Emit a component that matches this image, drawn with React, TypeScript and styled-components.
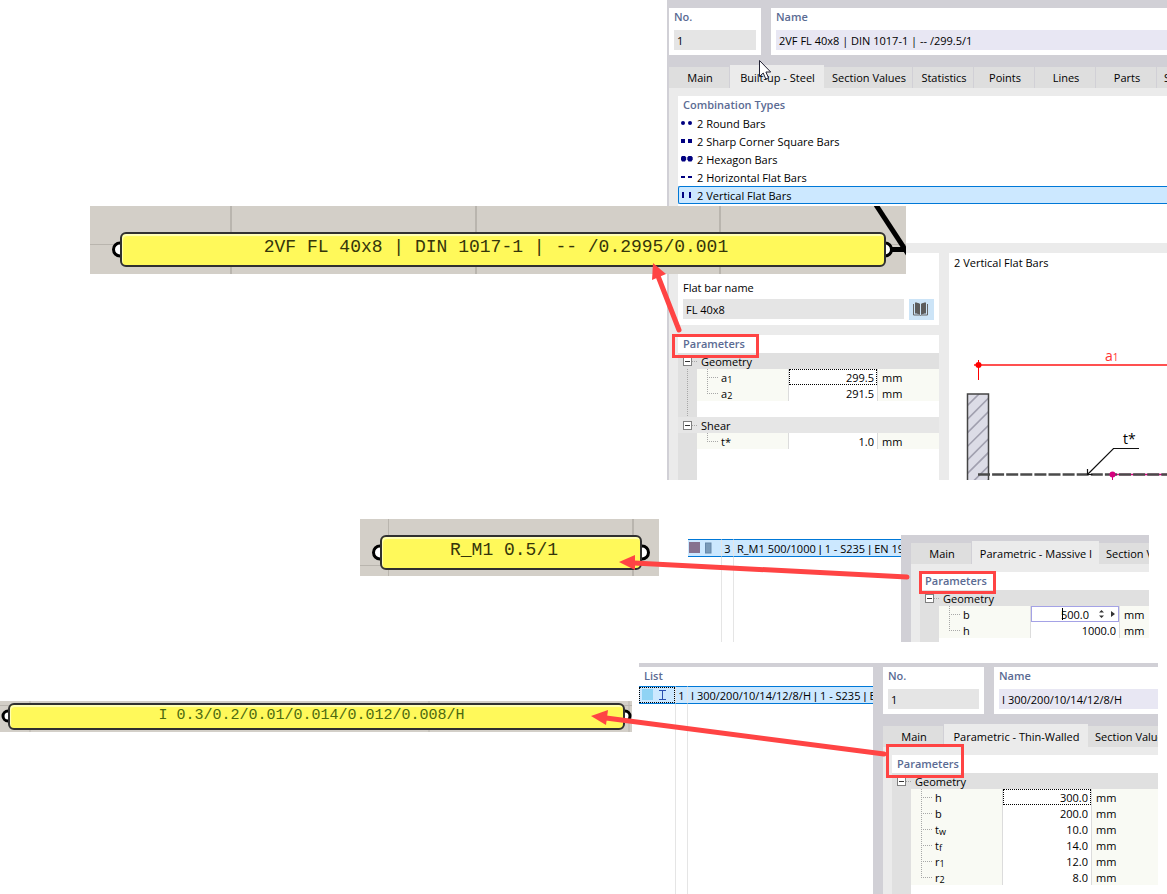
import React from "react";
import styled, { createGlobalStyle, css } from "styled-components";

const UI_FONT = `"Open Sans", "Noto Sans", sans-serif`;
const MONO_FONT = `"Liberation Mono", monospace`;

const color = {
  frame: "#d1d0d6",
  body: "#ebebeb",
  tab: "#dedede",
  field: "#e5e5e5",
  fieldName: "#e8e7f3",
  heading: "#5b6b93",
  gutter: "#e0e0e0",
  cell: "#f9faf4",
  select: "#cce8ff",
  selectEdge: "#0078d7",
  navy: "#000080",
  mark: "#ff4444",
  canvas: "#d3cfc8",
  canvasLine: "#b9b5ae",
};

const GlobalStyle = createGlobalStyle`
  *, *::before, *::after { box-sizing: border-box; }
  body {
    margin: 0;
    background: #fff;
    color: #000;
    font: 11px/16px ${UI_FONT};
  }
  button, input { font: inherit; color: inherit; border: 0; margin: 0; border-radius: 0; }
`;

/* ---------- page ---------- */

const Page = styled.main`
  display: flex;
  flex-direction: column;
  overflow: hidden;
`;

const Example = styled.section<{ $top?: number; $left: number; $right?: number }>`
  position: relative;
  display: flex;
  align-items: flex-start;
  margin-top: ${(p) => p.$top ?? 0}px;
  padding-left: ${(p) => p.$left}px;
  padding-right: ${(p) => p.$right ?? 0}px;
`;

const Annotations = styled.svg`
  position: absolute;
  left: 0;
  top: 0;
  width: 100%;
  height: 100%;
  overflow: visible;
  pointer-events: none;
`;

/* ---------- dialog parts ---------- */

const Dialog = styled.div<{ $edge: number; $top: number; $drop?: number }>`
  flex: 1;
  min-width: 0;
  display: flex;
  flex-direction: column;
  overflow: hidden;
  margin-top: ${(p) => p.$drop ?? 0}px;
  padding: ${(p) => p.$top}px 0 0 ${(p) => p.$edge}px;
  background: ${color.frame};
`;

const FieldBar = styled.div`
  display: flex;
  gap: 10px;
  margin-bottom: 10px;
`;

const FieldCard = styled.div<{ $width?: number }>`
  flex: ${(p) => (p.$width ? `none` : 1)};
  width: ${(p) => (p.$width ? `${p.$width}px` : "auto")};
  min-width: 0;
  display: flex;
  flex-direction: column;
  gap: 4px;
  padding: 0 ${(p) => (p.$width ? 5 : 0)}px 5px 5px;
  background: #fff;
`;

const Heading = styled.label`
  font-weight: 600;
  line-height: 18px;
  color: ${color.heading};
`;

const TextField = styled.input<{ $named?: boolean }>`
  width: 100%;
  min-width: 0;
  height: 20px;
  padding: 1px 3px 0;
  background: ${(p) => (p.$named ? color.fieldName : color.field)};
`;

const TabBar = styled.div`
  display: flex;
  align-items: flex-end;
  height: 23px;
`;

const Tab = styled.button<{ $width: number; $active?: boolean; $start?: boolean }>`
  flex: none;
  width: ${(p) => p.$width}px;
  height: ${(p) => (p.$active ? 23 : 21)}px;
  padding: ${(p) => (p.$active ? "2px 0 0 2px" : p.$start ? "0 0 0 7px" : "0 0 0 2px")};
  white-space: nowrap;
  text-align: ${(p) => (p.$start ? "left" : "center")};
  background: ${(p) => (p.$active ? color.body : color.tab)};
  border-right: 1px solid ${(p) => (p.$active ? color.body : color.frame)};
`;

const DialogBody = styled.div`
  flex: 1;
  display: flex;
  flex-direction: column;
  gap: 10px;
  padding: 8px 0 0 9px;
  background: ${color.body};
`;

const Columns = styled.div`
  flex: 1;
  display: flex;
  gap: 10px;
`;

const LeftColumn = styled.div`
  flex: none;
  width: 261px;
  display: flex;
  flex-direction: column;
  gap: 10px;
`;

/* ---------- combination types ---------- */

const TypeCard = styled.div`
  min-height: 147px;
  background: #fff;
`;

const CardTitle = styled.h2`
  margin: 0;
  padding-left: 5px;
  font-size: 11px;
  font-weight: 600;
  line-height: 18px;
  color: ${color.heading};
`;

const TypeList = styled.ul`
  margin: 0;
  padding: 0;
  list-style: none;
`;

const TypeItem = styled.li<{ $selected?: boolean }>`
  display: flex;
  align-items: center;
  gap: 4px;
  height: 18px;
  padding: 1px 0 0 2px;
  border: 1px solid transparent;
  border-right-width: 0;
  ${(p) =>
    p.$selected &&
    css`
      background: ${color.select};
      border-color: ${color.selectEdge};
      border-radius: 2px 0 0 2px;
    `}
`;

type Shape = "round" | "square" | "hexagon" | "horizontal" | "vertical";

const TypeIcon = ({ shape }: { shape: Shape }) => (
  <svg width="12" height="12" viewBox="0 0 12 12" fill={color.navy} aria-hidden="true">
    {shape === "round" && (
      <>
        <circle cx="2" cy="5" r="2" />
        <circle cx="9" cy="5" r="2" />
      </>
    )}
    {shape === "square" && (
      <>
        <rect x="0" y="3" width="4" height="4" />
        <rect x="7" y="3" width="4" height="4" />
      </>
    )}
    {shape === "hexagon" && (
      <>
        <path d="M1 2h3l1.200 1.500v2L4 7.500H1L-.2 5.500v-2z" />
        <path d="M7.500 2h3l1.200 1.500v2l-1.200 2h-3L6.300 5.500v-2z" />
      </>
    )}
    {shape === "horizontal" && (
      <>
        <rect x="0" y="4" width="4" height="2" />
        <rect x="7" y="4" width="4" height="2" />
      </>
    )}
    {shape === "vertical" && (
      <>
        <rect x="1" y="2" width="2" height="6" />
        <rect x="8" y="2" width="2" height="6" />
      </>
    )}
  </svg>
);

const types: { shape: Shape; name: string }[] = [
  { shape: "round", name: "2 Round Bars" },
  { shape: "square", name: "2 Sharp Corner Square Bars" },
  { shape: "hexagon", name: "2 Hexagon Bars" },
  { shape: "horizontal", name: "2 Horizontal Flat Bars" },
  { shape: "vertical", name: "2 Vertical Flat Bars" },
];

/* ---------- flat bar ---------- */

const FlatBarCard = styled.div`
  display: flex;
  flex-direction: column;
  justify-content: flex-end;
  gap: 3px;
  height: 72px;
  padding: 0 5px 5px;
  background: #fff;
`;

const FlatBarRow = styled.div`
  display: flex;
  gap: 5px;
`;

const LibraryButton = styled.button`
  flex: none;
  display: flex;
  align-items: center;
  justify-content: center;
  width: 25px;
  height: 21px;
  padding: 0 2px 2px 0;
  background: #cce4f7;
`;

const LibraryIcon = () => (
  <svg width="15" height="14" viewBox="0 0 15 14" aria-hidden="true">
    <path d="M.5 2v11h6l1 .5 1-.5h6V2" fill="none" stroke="#666" />
    <path d="M2 .5c2 0 4 .5 5 1.500v11c-1-1-3-1.500-5-1.500z" fill="#5c5c5c" />
    <path d="M13 .5c-2 0-4 .5-5 1.500v11c1-1 3-1.500 5-1.500z" fill="#5c5c5c" />
  </svg>
);

/* ---------- parameter table ---------- */

const ParamCard = styled.div`
  flex: 1;
  display: flex;
  flex-direction: column;
  background: #fff;
`;

const ParamArea = styled.div<{ $rest: number }>`
  flex: 1;
  padding-bottom: ${(p) => p.$rest}px;
  background: linear-gradient(to right, ${color.gutter} 19px, #fff 19px);
`;

const ParamTable = styled.table`
  width: 100%;
  table-layout: fixed;
  border-collapse: separate;
  border-spacing: 0;
  line-height: 14px;

  td, th { height: 16px; padding: 0; font-weight: 400; text-align: left; }
`;

const GroupHead = styled.th<{ $light?: boolean }>`
  background: ${(p) => (p.$light ? "#e6e6e6" : color.gutter)};
`;

const Line = styled.div`
  display: flex;
  align-items: center;
  height: 16px;
`;

const Label = styled.span`
  padding-top: 2px;
`;

const Toggle = styled.button`
  flex: none;
  width: 9px;
  height: 9px;
  margin: 0 0 0 5px;
  padding: 0;
  border: 1px solid #808080;
  background: linear-gradient(#333, #333) center / 5px 1px no-repeat #fff;
`;

const NameCell = styled.td`
  background: ${color.cell};
  border-right: 1px solid #dcdcdc;
`;

const ValueCell = styled.td`
  background: #fff;
  border-right: 1px solid #dcdcdc;
`;

const ValueBox = styled.div<{ $look?: "dotted" | "spin" }>`
  display: flex;
  align-items: center;
  height: 16px;
  border: 1px solid transparent;
  ${(p) => p.$look === "dotted" && css`border: 1px dotted #000;`}
  ${(p) =>
    p.$look === "spin" &&
    css`
      border-color: #a4a2e6;
      padding-right: 2px;
      background: linear-gradient(#000, #000) 30px 1px / 1px 12px no-repeat;
    `}
`;

const ValueInput = styled.input`
  flex: 1;
  min-width: 0;
  width: 100%;
  height: 14px;
  padding: 2px 2px 0 0;
  background: none;
  text-align: right;
`;

const UnitCell = styled.td`
  && { padding: 2px 0 0 4px; }
  background: ${color.cell};
`;

const Sub = styled.sub`
  font-size: 9px;
  line-height: 1px;
  vertical-align: -1px;
`;

const DOT = { stroke: "#a8a8a8", strokeDasharray: "1 1" };

const Stub = () => (
  <svg width="9" height="16" aria-hidden="true">
    <line x1="0" y1="8.5" x2="6" y2="8.5" {...DOT} />
  </svg>
);

const Branch = ({ last }: { last: boolean }) => (
  <svg width="24" height="16" aria-hidden="true">
    <line x1="10.5" y1="0" x2="10.5" y2={last ? 8 : 16} {...DOT} />
    <line x1="10" y1="8.5" x2="21" y2="8.5" {...DOT} />
  </svg>
);

const Trunk = () => (
  <svg width="19" height="16" display="block" aria-hidden="true">
    <line x1="9.5" y1="0" x2="9.5" y2="16" {...DOT} />
  </svg>
);

const Spinner = () => (
  <svg width="25" height="14" viewBox="-3 0 25 14" fill="#333" aria-hidden="true">
    <path d="M5 5.500 7.500 3 10 5.500zM5 8.500 7.500 11 10 8.500zM17 4v6l4-3z" />
  </svg>
);

type Param = { name: string; sub?: string; value: string; look?: "dotted" | "spin" };
type Group = { title: string; rows: Param[]; linked?: boolean };

const Parameters = ({ groups, rest }: { groups: Group[]; rest: number }) => (
  <ParamCard>
    <CardTitle>Parameters</CardTitle>
    <ParamArea $rest={rest}>
      <ParamTable>
        <colgroup>
          <col width="19" />
          <col width="92" />
          <col width="89" />
          <col />
        </colgroup>
        {groups.map((g, gi) => (
          <tbody key={g.title}>
            <tr>
              <GroupHead colSpan={4} scope="rowgroup" $light={gi > 0}>
                <Line>
                  <Toggle aria-label={`Collapse ${g.title}`} />
                  <Stub />
                  <Label>{g.title}</Label>
                </Line>
              </GroupHead>
            </tr>
            {g.rows.map((r, i) => (
              <tr key={r.name + (r.sub ?? "")}>
                <td>{g.linked && <Trunk />}</td>
                <NameCell>
                  <Line>
                    <Branch last={i === g.rows.length - 1} />
                    <Label>
                      {r.name}
                      {r.sub && <Sub>{r.sub}</Sub>}
                    </Label>
                  </Line>
                </NameCell>
                <ValueCell>
                  <ValueBox $look={r.look}>
                    <ValueInput aria-label={r.name + (r.sub ?? "")} defaultValue={r.value} />
                    {r.look === "spin" && <Spinner />}
                  </ValueBox>
                </ValueCell>
                <UnitCell>mm</UnitCell>
              </tr>
            ))}
            {g.linked && (
              <tr>
                <td>
                  <Trunk />
                </td>
                <td colSpan={3} />
              </tr>
            )}
          </tbody>
        ))}
      </ParamTable>
    </ParamArea>
  </ParamCard>
);

/* ---------- preview drawing ---------- */

const PreviewCard = styled.div`
  flex: 1;
  min-width: 0;
  display: flex;
  flex-direction: column;
  overflow: hidden;
  background: #fff;
`;

const PreviewTitle = styled.div`
  padding: 2px 5px;
`;

const Drawing = styled.svg`
  display: block;
  width: 100%;
  height: 207px;
  font-family: ${UI_FONT};
  font-size: 14px;
`;

const hatchLines = [0, 1, 2, 3, 4, 5, 6, 7].map((k) => 132 + k * 13.6);

const Preview = () => (
  <PreviewCard>
    <PreviewTitle>2 Vertical Flat Bars</PreviewTitle>
    <Drawing role="img" aria-label="Two vertical flat bars">
      <defs>
        <clipPath id="bar">
          <rect x="18.500" y="121" width="21" height="100" />
        </clipPath>
      </defs>
      <line x1="25" y1="92" x2="100%" y2="92" stroke="#ff5050" strokeWidth="2" />
      <line x1="29.500" y1="87" x2="29.500" y2="107" stroke="#f00" />
      <circle cx="29.500" cy="92" r="3" fill="#f00" />
      <text x="156" y="88" fill="#f33">
        a<tspan fontSize="10">1</tspan>
      </text>
      <rect x="18.500" y="121" width="21" height="100" fill="#dcdce6" />
      <g clipPath="url(#bar)" stroke="#a09fae" strokeWidth="1.600">
        {hatchLines.map((y) => (
          <line key={y} x1="18" y1={y + 1} x2="41" y2={y - 22} />
        ))}
      </g>
      <rect x="18.500" y="121" width="21" height="100" fill="none" stroke="#444" strokeWidth="1.500" />
      <line x1="163" y1="201.500" x2="100%" y2="201.500" stroke="#d6007f" strokeWidth="1.500" />
      <line x1="29" y1="201.500" x2="100%" y2="201.500" stroke="#4a4a4a" strokeWidth="2.500" strokeDasharray="12 2.100" />
      <path d="M163.500 201v6" stroke="#d6007f" />
      <circle cx="163.500" cy="201.500" r="3" fill="#d6007f" />
      <path d="M190 175.500h-25.500L139 201M138.500 196v5.500h5" fill="none" stroke="#111" strokeWidth="1.200" />
      <text x="174" y="171">t*</text>
    </Drawing>
  </PreviewCard>
);

/* ---------- script canvas strips ---------- */

const Strip = styled.div<{ $width: number; $height: number; $over?: boolean; $drop?: number }>`
  flex: none;
  position: relative;
  display: flex;
  width: ${(p) => p.$width}px;
  height: ${(p) => p.$height}px;
  margin-top: ${(p) => p.$drop ?? 0}px;
  overflow: hidden;
  background: ${color.canvas};
  ${(p) =>
    p.$over &&
    css`
      position: absolute;
      left: 90px;
      top: 206px;
    `}
`;

const StripArt = styled.svg`
  position: absolute;
  left: 0;
  top: 0;
  width: 100%;
  height: 100%;
`;

const Note = styled.div<{ $m: string; $small?: boolean }>`
  position: relative;
  flex: 1;
  display: flex;
  align-items: center;
  justify-content: center;
  margin: ${(p) => p.$m};
  padding: ${(p) => (p.$small ? "0 10px 1px 0" : "0 14px 6px 0")};
  border: 2px solid #303030;
  border-radius: 6px;
  background: #fff95a;
  box-shadow: inset 1px 2px 1px #ffffb8;
  font: ${(p) => (p.$small ? 15 : 18)}px/20px ${MONO_FONT};
  color: ${(p) => (p.$small ? "#4c6a10" : "#35350a")};
  white-space: pre;
`;

const Port = ({ x, y, r }: { x: number; y: number; r: number }) => (
  <circle cx={x} cy={y} r={r} fill="#fff" stroke="#000" strokeWidth="3" />
);

/* ---------- section list ---------- */

const ListPane = styled.div<{ $width: number; $height: number; $gap: number; $drop?: number; $bar?: boolean }>`
  flex: none;
  display: flex;
  flex-direction: column;
  gap: 1px;
  width: ${(p) => p.$width}px;
  height: ${(p) => p.$height}px;
  margin-left: ${(p) => p.$gap}px;
  padding-top: ${(p) => p.$drop ?? 0}px;
  border-top: ${(p) => (p.$bar ? `4px solid ${color.frame}` : "0")};
`;

const ListGrid = styled.table`
  width: 100%;
  flex: 1;
  table-layout: fixed;
  border-collapse: separate;
  border-spacing: 0;

  td { padding: 0; border-right: 1px solid #e5e5e5; white-space: nowrap; overflow: hidden; }
  td:last-child { border-right: 0; padding-left: 3px; }
`;

const ListRow = styled.tr`
  height: 18px;
  line-height: 14px;

  td {
    height: 18px;
    background: ${color.select};
    border-top: 1px solid ${color.selectEdge};
    border-bottom: 1px solid ${color.selectEdge};
  }
  td:nth-child(2) { padding-top: 2px; text-align: center; }
  td:nth-child(3) { padding-top: 2px; }
`;

const IconBox = styled.div<{ $focus?: boolean }>`
  display: flex;
  align-items: center;
  height: 16px;
  padding-left: 1px;
  ${(p) => p.$focus && css`outline: 1px dotted #000; outline-offset: -1px;`}
`;

const Bar = styled.span`
  font-family: "Liberation Sans", sans-serif;
`;

const ListTable = ({
  icon, no, parts, focus, first,
}: { icon: React.ReactNode; no: string; parts: string[]; focus?: boolean; first: number }) => (
  <ListGrid>
    <colgroup>
      <col width={first} />
      <col width="12" />
      <col />
    </colgroup>
    <tbody>
      <ListRow>
        <td><IconBox $focus={focus}>{icon}</IconBox></td>
        <td>{no}</td>
        <td>
          {parts.map((part, i) => (
            <React.Fragment key={part}>
              {i > 0 && <Bar> | </Bar>}
              {part}
            </React.Fragment>
          ))}
        </td>
      </ListRow>
      <tr><td /><td /><td /></tr>
    </tbody>
  </ListGrid>
);

/* ---------- app ---------- */

const IdentityBar = ({ id, width, name }: { id: string; width: number; name: string }) => (
  <FieldBar>
    <FieldCard $width={width}>
      <Heading htmlFor={`${id}-no`}>No.</Heading>
      <TextField id={`${id}-no`} defaultValue="1" />
    </FieldCard>
    <FieldCard>
      <Heading htmlFor={`${id}-name`}>Name</Heading>
      <TextField id={`${id}-name`} $named defaultValue={name} />
    </FieldCard>
  </FieldBar>
);

export default function App() {
  return (
    <>
      <GlobalStyle />
      <Page>
        <Example $left={667}>
          <Dialog $edge={2} $top={8}>
            <IdentityBar id="built" width={92} name="2VF FL 40x8 | DIN 1017-1 | -- /299.5/1" />
            <TabBar>
              <Tab $width={61}>Main</Tab>
              <Tab $width={94} $active>Built-up - Steel</Tab>
              <Tab $width={89}>Section Values</Tab>
              <Tab $width={61}>Statistics</Tab>
              <Tab $width={61}>Points</Tab>
              <Tab $width={61}>Lines</Tab>
              <Tab $width={61}>Parts</Tab>
              <Tab $width={61} $start>S</Tab>
            </TabBar>
            <DialogBody>
              <TypeCard>
                <CardTitle>Combination Types</CardTitle>
                <TypeList>
                  {types.map((t) => (
                    <TypeItem key={t.shape} $selected={t.shape === "vertical"}>
                      <TypeIcon shape={t.shape} />
                      {t.name}
                    </TypeItem>
                  ))}
                </TypeList>
              </TypeCard>
              <Columns>
                <LeftColumn>
                  <FlatBarCard>
                    <label htmlFor="flat-bar">Flat bar name</label>
                    <FlatBarRow>
                      <TextField id="flat-bar" defaultValue="FL 40x8" />
                      <LibraryButton aria-label="Open library">
                        <LibraryIcon />
                      </LibraryButton>
                    </FlatBarRow>
                  </FlatBarCard>
                  <Parameters
                    rest={31}
                    groups={[
                      {
                        title: "Geometry",
                        linked: true,
                        rows: [
                          { name: "a", sub: "1", value: "299.5", look: "dotted" },
                          { name: "a", sub: "2", value: "291.5" },
                        ],
                      },
                      { title: "Shear", rows: [{ name: "t*", value: "1.0" }] },
                    ]}
                  />
                </LeftColumn>
                <Preview />
              </Columns>
            </DialogBody>
          </Dialog>

          <Strip $width={816} $height={68} $over>
            <StripArt aria-hidden="true">
              <path d="M141 0v68M386 0v68M630 0v68" stroke={color.canvasLine} strokeWidth="2" />
              <path d="M0 38.500h816" stroke={color.canvasLine} />
              <Port x={30} y={43.5} r={6.5} />
              <path d="M795 43.500h21" stroke="#000" strokeWidth="5" />
              <path d="M786-1 818 48" stroke="#000" strokeWidth="5" />
              <Port x={795} y={43.5} r={6.5} />
            </StripArt>
            <Note $m="26px 20px 7px 30px">
              2VF FL 40x8 | DIN 1017-1 | -- /0.2995/0.001
            </Note>
          </Strip>

          <Annotations aria-hidden="true">
            <path d="M679 330 658 276" stroke={color.mark} strokeWidth="5" strokeLinecap="round" />
            <path d="M653 263 666 274 652 280z" fill={color.mark} />
            <rect x="673.500" y="335.500" width="84" height="21" fill="none" stroke={color.mark} strokeWidth="3" />
            <path
              d="M759.500 60.500v16l3.700-3.500 2.600 6 2.700-1.200-2.600-5.800h4.800z"
              fill="#fff"
              stroke="#223"
              strokeWidth="1"
            />
          </Annotations>
        </Example>

        <Example $top={39} $left={360} $right={18}>
          <Strip $width={299} $height={57}>
            <StripArt aria-hidden="true">
              <path d="M28.500 0v57M0 46.500h299" stroke={color.canvasLine} />
              <path d="M273 0v57" stroke={color.canvasLine} strokeWidth="2" />
              <Port x={20} y={33.5} r={6.5} />
              <Port x={282} y={33.5} r={6.5} />
            </StripArt>
            <Note $m="16px 17px 6px 20px">R_M1 0.5/1</Note>
          </Strip>
          <ListPane $width={213} $height={123} $gap={29} $drop={20}>
            <ListTable
              first={34}
              no="3"
              parts={["R_M1 500/1000", "1 - S235", "EN 19"]}
              icon={
                <svg width="24" height="12" aria-hidden="true">
                  <rect y="0" width="11" height="11" fill="#86728f" />
                  <rect x="16.500" y="1" width="5.500" height="10" fill="#7a9ab8" stroke="#6688aa" />
                </svg>
              }
            />
          </ListPane>
          <Dialog $edge={10} $top={6} $drop={16}>
            <TabBar>
              <Tab $width={61}>Main</Tab>
              <Tab $width={127} $active>Parametric - Massive I</Tab>
              <Tab $width={89} $start>Section Values</Tab>
            </TabBar>
            <DialogBody>
              <Parameters
                rest={4}
                groups={[
                  {
                    title: "Geometry",
                    rows: [
                      { name: "b", value: "500.0", look: "spin" },
                      { name: "h", value: "1000.0" },
                    ],
                  },
                ]}
              />
            </DialogBody>
          </Dialog>
          <Annotations aria-hidden="true">
            <path d="M907 58 634 44" stroke={color.mark} strokeWidth="5" strokeLinecap="round" />
            <path d="M619 43 635 36v15z" fill={color.mark} />
            <rect x="920.500" y="53.500" width="74" height="20" fill="none" stroke={color.mark} strokeWidth="3" />
          </Annotations>
        </Example>

        <Example $top={21} $left={0} $right={9}>
          <Strip $width={632} $height={31} $drop={38}>
            <StripArt aria-hidden="true">
              <path d="M30 0v31M429 0v31M629 0v31M0 4.500h632" stroke={color.canvasLine} />
              <Port x={8} y={15} r={5} />
              <Port x={625} y={15} r={5} />
            </StripArt>
            <Note $m="2px 7px 2px 8px" $small>
              I 0.3/0.2/0.01/0.014/0.012/0.008/H
            </Note>
          </Strip>
          <ListPane $width={234} $height={231} $gap={7} $bar>
            <CardTitle as="h3">List</CardTitle>
            <ListTable
              first={37}
              no="1"
              focus
              parts={["I 300/200/10/14/12/8/H", "1 - S235", "E"]}
              icon={
                <svg width="28" height="12" aria-hidden="true">
                  <rect x="2" width="11" height="11" fill="#8fd3f4" />
                  <path d="M19 1.500h7M19 10.500h7M22.500 1v10" stroke="#2a50b0" />
                </svg>
              }
            />
          </ListPane>
          <Dialog $edge={10} $top={4}>
            <IdentityBar id="thin" width={101} name="I 300/200/10/14/12/8/H" />
            <TabBar>
              <Tab $width={61}>Main</Tab>
              <Tab $width={144} $active>Parametric - Thin-Walled</Tab>
              <Tab $width={89} $start>Section Values</Tab>
            </TabBar>
            <DialogBody>
              <Parameters
                rest={9}
                groups={[
                  {
                    title: "Geometry",
                    rows: [
                      { name: "h", value: "300.0", look: "dotted" },
                      { name: "b", value: "200.0" },
                      { name: "t", sub: "w", value: "10.0" },
                      { name: "t", sub: "f", value: "14.0" },
                      { name: "r", sub: "1", value: "12.0" },
                      { name: "r", sub: "2", value: "8.0" },
                    ],
                  },
                ]}
              />
            </DialogBody>
          </Dialog>
          <Annotations aria-hidden="true">
            <path d="M884 91 606 55" stroke={color.mark} strokeWidth="5" strokeLinecap="round" />
            <path d="M591 53 608 47 606 62z" fill={color.mark} />
            <rect x="887.500" y="82.500" width="75" height="31" fill="none" stroke={color.mark} strokeWidth="3" />
          </Annotations>
        </Example>
      </Page>
    </>
  );
}
